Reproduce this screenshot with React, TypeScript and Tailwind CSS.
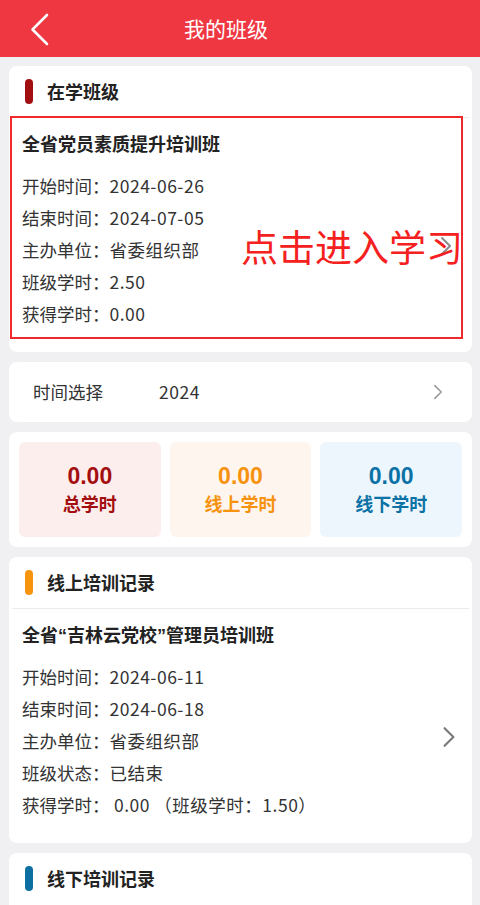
import React from "react";

const Chevron = ({ className }: { className?: string }) => (
  <svg viewBox="0 0 12 20" className={className} fill="none">
    <polyline points="2,2 10,10 2,18" stroke="currentColor" strokeWidth="2" strokeLinecap="round" strokeLinejoin="round" />
  </svg>
);

const Row = ({ label, value }: { label: string; value: React.ReactNode }) => (
  <div className="h-[32px] leading-[32px] text-[17.5px] text-[#333] whitespace-nowrap">
    {label}：<span className="tracking-[0.5px]">{value}</span>
  </div>
);

const SectionHeader = ({ color, title }: { color: string; title: string }) => (
  <div className="h-[51px] flex items-center pl-[16px]">
    <div className={`w-[8px] h-[25px] rounded-full ${color}`} />
    <div className="ml-[14px] text-[18px] font-bold text-[#222]">{title}</div>
  </div>
);

const Stat = ({ bg, color, label }: { bg: string; color: string; label: string }) => (
  <div className={`rounded-[6px] ${bg} flex flex-col items-center justify-center`}>
    <div className={`text-[23px] leading-[27px] font-bold font-['Liberation_Sans',sans-serif] ${color}`}>0.00</div>
    <div className={`text-[18px] leading-[27px] font-bold ${color}`}>{label}</div>
  </div>
);

export default function App() {
  return (
    <div className="w-[480px] h-[905px] overflow-hidden bg-[#f0f0f2] font-['Noto_Sans_CJK_SC',sans-serif]">
      {/* Top bar */}
      <div className="h-[57px] bg-[#ef3742] relative flex items-center justify-center pr-[28px]">
        <svg className="absolute left-[30px] top-[13px]" width="20" height="33" viewBox="0 0 20 33" fill="none">
          <polyline points="17,2 2.5,16.5 17,31" stroke="white" strokeWidth="2.6" strokeLinecap="round" strokeLinejoin="round" />
        </svg>
        <div className="text-white text-[21px]">我的班级</div>
      </div>

      <div className="flex flex-col gap-[10px] pt-[9px] pl-[9px] pr-[8px]">
        {/* Card 1 */}
        <div className="relative bg-white rounded-[8px] h-[286px]">
          <SectionHeader color="bg-[#a10f10]" title="在学班级" />
          <div className="h-[1px] bg-[#ebebeb] mx-[3px]" />
          <div className="flex">
            <div className="flex-1 pl-[13px]">
              <div className="pt-[10px] h-[40px] leading-[30px] text-[18px] font-bold text-[#222]">全省党员素质提升培训班</div>
              <div className="mt-[12px]">
                <Row label="开始时间" value="2024-06-26" />
                <Row label="结束时间" value="2024-07-05" />
                <Row label="主办单位" value="省委组织部" />
                <Row label="班级学时" value="2.50" />
                <Row label="获得学时" value="0.00" />
              </div>
            </div>
            <div className="flex items-center pt-[44px] pr-[20px]">
              <Chevron className="w-[12px] h-[20px] text-[#8a8a8a]" />
            </div>
          </div>
          {/* annotation overlay */}
          <div className="absolute left-[1px] top-[50px] right-[9px] bottom-[13px] border-2 border-[#f02a2a]" />
          <div className="absolute left-[232px] top-[160px] text-[37px] leading-[40px] text-[#f52020] whitespace-nowrap">点击进入学习</div>
        </div>

        {/* Card 2 */}
        <div className="bg-white rounded-[8px] h-[60px] flex items-center pl-[24px] pr-[29px]">
          <div className="w-[126px] text-[17.5px] text-[#333]">时间选择</div>
          <div className="flex-1 text-[17.5px] text-[#333] tracking-[0.5px]">2024</div>
          <Chevron className="w-[10px] h-[16px] text-[#9a9a9a]" />
        </div>

        {/* Card 3 */}
        <div className="bg-white rounded-[8px] h-[115px] px-[10px] py-[10px] grid grid-cols-3 gap-[9px]">
          <Stat bg="bg-[#fdeeee]" color="text-[#a30e10]" label="总学时" />
          <Stat bg="bg-[#fef5ee]" color="text-[#f6920e]" label="线上学时" />
          <Stat bg="bg-[#eef6fd]" color="text-[#0b72a5]" label="线下学时" />
        </div>

        {/* Card 4 */}
        <div className="bg-white rounded-[8px] h-[286px]">
          <SectionHeader color="bg-[#f7930d]" title="线上培训记录" />
          <div className="h-[1px] bg-[#ebebeb] mx-[3px]" />
          <div className="flex">
            <div className="flex-1 pl-[13px]">
              <div className="pt-[10px] h-[40px] leading-[30px] text-[18px] font-bold text-[#222]">
                全省<span className="font-['Liberation_Sans',sans-serif]">“</span>吉林云党校<span className="font-['Liberation_Sans',sans-serif]">”</span>管理员培训班
              </div>
              <div className="mt-[12px]">
                <Row label="开始时间" value="2024-06-11" />
                <Row label="结束时间" value="2024-06-18" />
                <Row label="主办单位" value="省委组织部" />
                <Row label="班级状态" value="已结束" />
                <Row label="获得学时" value={<span> 0.00 （班级学时：1.50）</span>} />
              </div>
            </div>
            <div className="flex items-center pt-[44px] pr-[16px]">
              <Chevron className="w-[14px] h-[22px] text-[#7a7a7a]" />
            </div>
          </div>
        </div>

        {/* Card 5 */}
        <div className="bg-white rounded-[8px] h-[120px]">
          <SectionHeader color="bg-[#0b6fa2]" title="线下培训记录" />
        </div>
      </div>
    </div>
  );
}
